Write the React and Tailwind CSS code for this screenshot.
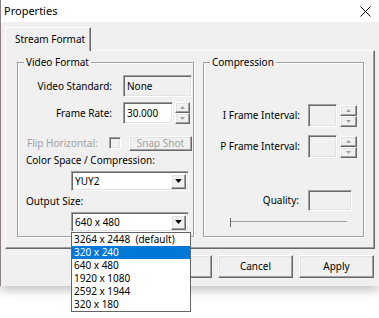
import { Fragment } from "react";

const font = { fontFamily: '"Noto Sans", "Open Sans", sans-serif' };

const Raised = ({ className = "", children }) => (
  <div
    className={`flex items-center justify-center border border-t-white border-l-white border-r-[#696969] border-b-[#696969] bg-[#f0f0f0] shadow-[inset_-1px_-1px_0_#a0a0a0,inset_1px_1px_0_#e3e3e3] ${className}`}
  >
    {children}
  </div>
);

const Sunken = ({ className = "", children }) => (
  <div
    className={`flex items-center border border-t-[#a0a0a0] border-l-[#a0a0a0] border-r-white border-b-white shadow-[inset_1px_1px_0_#696969,inset_-1px_-1px_0_#e3e3e3] ${className}`}
  >
    {children}
  </div>
);

const Tri = ({ up, color = "#a0a0a0", w = 5, h = 3 }) => (
  <svg width={w} height={h} viewBox="0 0 5 3">
    <path d={up ? "M2.5 0 L5 3 L0 3 Z" : "M0 0 L5 0 L2.5 3 Z"} fill={color} />
  </svg>
);

const Spin = ({ w, h }) => (
  <div className="flex flex-col">
    <Raised className={`${w} ${h}`}>
      <Tri up />
    </Raised>
    <Raised className={`${w} ${h}`}>
      <Tri />
    </Raised>
  </div>
);

const Group = ({ title, className = "", children }) => (
  <div
    className={`relative border border-[#a0a0a0] shadow-[1px_1px_0_white,inset_1px_1px_0_white] ${className}`}
  >
    <span className="absolute -top-[8px] left-[6px] bg-[#f0f0f0] px-[2px] leading-[14px]">
      {title}
    </span>
    {children}
  </div>
);

const Combo = ({ value, children }) => (
  <div className="relative ml-[53px] w-[118px]">
    <Sunken className="h-[20px] bg-white pl-[3px] pr-[2px]">
      <span className="flex-1">{value}</span>
      <Raised className="h-[15px] w-[15px]">
        <Tri color="#000" w={7} h={4} />
      </Raised>
    </Sunken>
    {children}
  </div>
);

const sizes = [
  "3264 x 2448  (default)",
  "320 x 240",
  "640 x 480",
  "1920 x 1080",
  "2592 x 1944",
  "320 x 180",
];

export default function App() {
  return (
    <div className="h-[318px] w-[379px] overflow-hidden bg-white text-[10px] text-black" style={font}>
      <div className="flex h-[286px] flex-col border-l border-[#8a8080] bg-[#f0f0f0] shadow-[0_4px_10px_rgba(0,0,0,0.25)]">
        {/* title bar */}
        <div className="flex h-[22px] items-center justify-between bg-white pl-[3px] pr-[8px]">
          <span className="text-[11px]">Properties</span>
          <svg width="11" height="11" viewBox="0 0 11 11">
            <path d="M0.5 0.5 L10.5 10.5 M10.5 0.5 L0.5 10.5" stroke="#000" strokeWidth="1" />
          </svg>
        </div>

        {/* tabs */}
        <div className="ml-[4px] mt-[5px] flex">
          <div className="relative z-10 -mb-px flex h-[24px] w-[86px] items-center border-l border-t border-r border-l-white border-t-white border-r-[#696969] bg-[#f0f0f0] pl-[9px] shadow-[inset_-1px_0_0_#a0a0a0]">
            Stream Format
          </div>
        </div>
        <div className="ml-[4px] flex h-[199px] w-[370px] gap-[9px] border border-t-white border-l-white border-r-[#696969] border-b-[#696969] pl-[11px] pt-[11px] shadow-[inset_-1px_-1px_0_#a0a0a0]">
          {/* Video Format */}
          <Group title="Video Format" className="h-[175px] w-[177px]">
            <div className="flex flex-col">
              <div className="ml-[10px] mt-[12px] flex items-center">
                <span className="w-[84px] text-right">Video Standard:</span>
                <Sunken className="ml-[11px] h-[22px] w-[69px] pl-[3px]">None</Sunken>
              </div>
              <div className="ml-[10px] mt-[5px] flex items-center">
                <span className="w-[84px] text-right">Frame Rate:</span>
                <Sunken className="ml-[11px] h-[22px] w-[50px] bg-white pl-[3px]">30.000</Sunken>
                <div className="ml-[2px]">
                  <Spin w="w-[15px]" h="h-[11px]" />
                </div>
              </div>
              <div className="ml-[9px] mt-[12px] flex h-[14px] items-center text-[#a0a0a0]">
                <span className="w-[82px]">Flip Horizontal:</span>
                <Sunken className="h-[12px] w-[12px] bg-[#f0f0f0]" />
                <Raised className="ml-[8px] h-[15px] w-[63px]">Snap Shot</Raised>
              </div>
              <div className="ml-[8px] mt-[4px] leading-[12px]">Color Space / Compression:</div>
              <div className="mt-[5px]">
                <Combo value="YUY2" />
              </div>
              <div className="ml-[8px] mt-[4px] leading-[12px]">Output Size:</div>
              <div className="mt-[5px]">
                <Combo value="640 x 480">
                  <div className="absolute left-0 top-[20px] z-20 w-[120px] border border-[#646464] bg-white">
                    {sizes.map((s, i) => (
                      <div
                        key={s}
                        className={`flex h-[13px] items-center whitespace-pre pl-[2px] leading-[13px] ${
                          i === 1 ? "bg-[#0078d7] text-white" : ""
                        }`}
                      >
                        {s}
                      </div>
                    ))}
                  </div>
                </Combo>
              </div>
            </div>
          </Group>

          {/* Compression */}
          <Group title="Compression" className="h-[175px] w-[161px]">
            <div className="flex flex-col">
              {["I Frame Interval:", "P Frame Interval:"].map((l, i) => (
                <Fragment key={l}>
                  <div className={`flex items-center ${i === 0 ? "mt-[41px]" : "mt-[8px]"}`}>
                    <span className="w-[96px] text-right">{l}</span>
                    <Sunken className="ml-[8px] h-[23px] w-[29px]" />
                    <div className="ml-[3px]">
                      <Spin w="w-[17px]" h="h-[11px]" />
                    </div>
                  </div>
                </Fragment>
              ))}
              <div className="mt-[32px] flex items-center">
                <span className="w-[95px] text-right">Quality:</span>
                <Sunken className="ml-[9px] h-[21px] w-[44px]" />
              </div>
              {/* slider */}
              <div className="relative ml-[25px] mt-[7px] h-[9px] w-[118px]">
                <div className="absolute left-0 right-0 top-[3px] h-[2px] border-t border-[#a0a0a0] border-b-white" />
                <div className="absolute left-[-1px] top-0 h-[9px] w-[3px] border-l border-white border-r border-r-[#696969] bg-[#f0f0f0]" />
              </div>
            </div>
          </Group>
        </div>

        {/* buttons */}
        <div className="mr-[5px] mt-[6px] flex justify-end gap-[6px]">
          <Raised className="h-[23px] w-[75px]">OK</Raised>
          <Raised className="h-[23px] w-[75px]">Cancel</Raised>
          <Raised className="h-[23px] w-[75px]">Apply</Raised>
        </div>
      </div>
    </div>
  );
}
